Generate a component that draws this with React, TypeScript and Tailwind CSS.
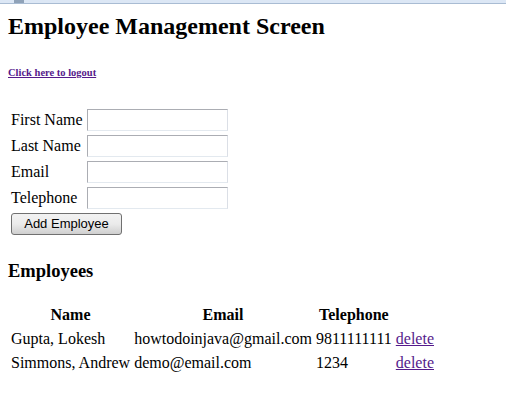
export default function App() {
  const employees = [
    { name: "Gupta, Lokesh", email: "howtodoinjava@gmail.com", telephone: "9811111111" },
    { name: "Simmons, Andrew", email: "demo@email.com", telephone: "1234" },
  ];

  const fields = ["First Name", "Last Name", "Email", "Telephone"];

  return (
    <div className="min-h-[406px] bg-white text-black font-['Liberation_Serif',serif] text-[16px]">
      {/* browser chrome remnant */}
      <div className="relative h-[4px] bg-[#dce7f5] border-b border-[#a9bcd3]">
        <div className="absolute left-[14px] top-0 h-[3px] w-[10px] bg-[#8fa2b8]" />
      </div>

      <div className="px-2">
        <h1 className="pt-[8px] text-[24px] leading-[28px] font-bold">Employee Management Screen</h1>

        <h6 className="mt-[27px] text-[10.5px] leading-[12px] font-bold">
          <a href="#" className="text-[#551a8b] underline">Click here to logout</a>
        </h6>

        <form className="mt-[27px]">
          <table className="border-separate border-spacing-[2px]">
            <tbody>
              {fields.map((f) => (
                <tr key={f}>
                  <td className="p-px leading-[22px]">{f}</td>
                  <td className="p-px">
                    <input
                      type="text"
                      className="block w-[141px] h-[22px] border border-[#abadb3] border-b-[#e3e9ef] border-r-[#dbdfe6] bg-white"
                    />
                  </td>
                </tr>
              ))}
              <tr>
                <td colSpan={2} className="p-px">
                  <button
                    type="button"
                    className="block w-[111px] h-[22px] rounded-[3px] border border-[#707070] bg-gradient-to-b from-[#f2f2f2] via-[#ebebeb] to-[#cfcfcf] font-['Liberation_Sans',sans-serif] text-[13px] leading-[20px] text-black"
                  >
                    Add Employee
                  </button>
                </td>
              </tr>
            </tbody>
          </table>
        </form>

        <h3 className="mt-[22px] text-[18.5px] leading-[22px] font-bold">Employees</h3>

        <table className="mt-[19px] border-separate border-spacing-[2px]">
          <thead>
            <tr>
              <th className="p-px leading-[21px] font-bold text-center">Name</th>
              <th className="p-px leading-[21px] font-bold text-center">Email</th>
              <th className="p-px leading-[21px] font-bold text-center">Telephone</th>
              <th className="p-px" />
            </tr>
          </thead>
          <tbody>
            {employees.map((e) => (
              <tr key={e.name}>
                <td className="p-px leading-[20px]">{e.name}</td>
                <td className="p-px leading-[20px]">{e.email}</td>
                <td className="p-px leading-[20px]">{e.telephone}</td>
                <td className="p-px leading-[20px]">
                  <a href="#" className="text-[#551a8b] underline">delete</a>
                </td>
              </tr>
            ))}
          </tbody>
        </table>
      </div>
    </div>
  );
}
